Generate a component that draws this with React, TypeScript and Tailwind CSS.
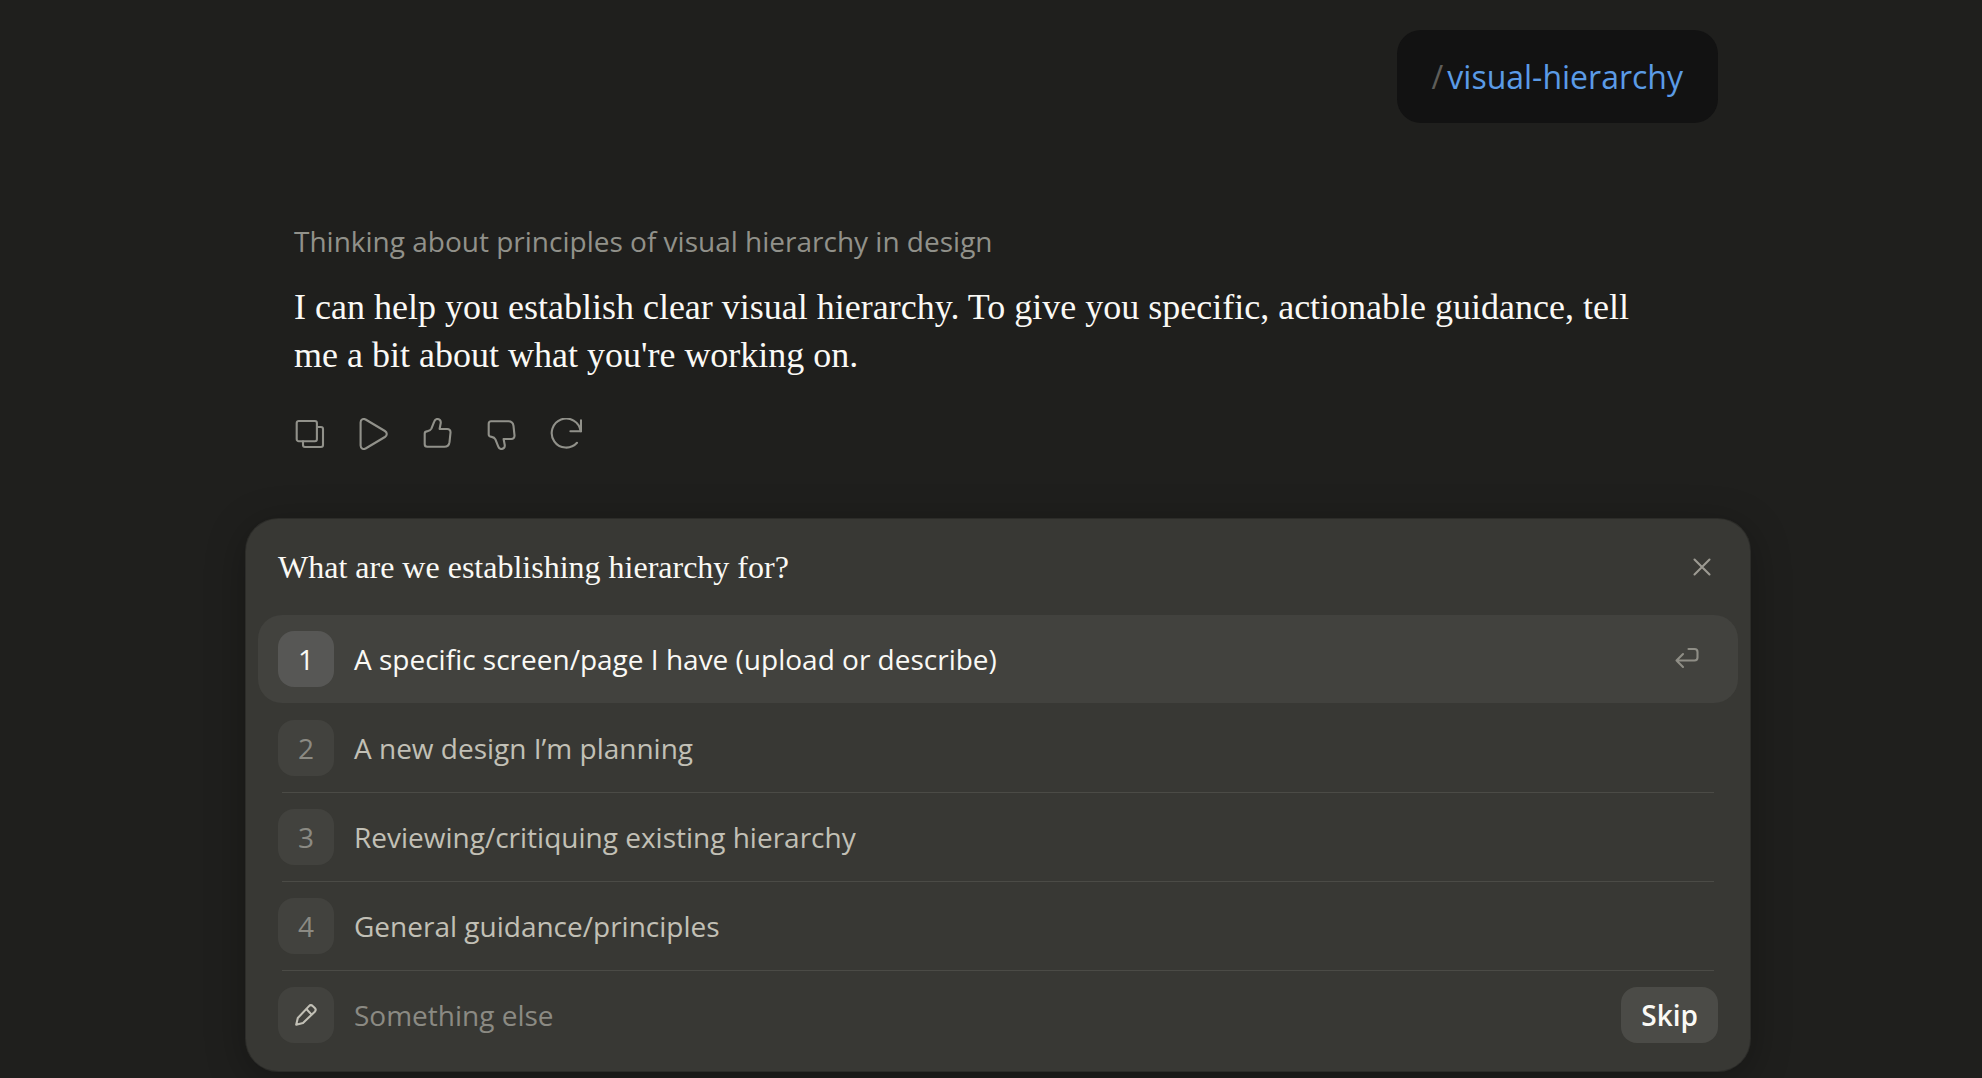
import type { ReactNode } from "react";

const options = [
  "A specific screen/page I have (upload or describe)",
  "A new design I’m planning",
  "Reviewing/critiquing existing hierarchy",
  "General guidance/principles",
];

function Icon({ children, className = "size-8" }: { children: ReactNode; className?: string }) {
  return (
    <svg
      viewBox="0 0 32 32"
      fill="none"
      stroke="currentColor"
      strokeWidth="2.1"
      strokeLinecap="round"
      strokeLinejoin="round"
      aria-hidden="true"
      className={className}
    >
      {children}
    </svg>
  );
}

const thumb =
  "M2.7 15.5C2.7 13.6 4 13.3 5.6 13.1C7.4 12.8 8.6 12.2 9.4 10.6L12.3 3.4C12.9 1.7 14 1 15.3 1C17.8 1 19.1 2.9 18.7 5.2L17.6 11H25.2C27.4 11 28.7 12.5 28.5 14.6L27.5 24.2C27.1 27.2 25.4 28.8 22.4 28.8H5.2C3.6 28.8 2.7 27.9 2.7 26.3Z";

const actions: { label: string; icon: ReactNode }[] = [
  {
    label: "Copy",
    icon: (
      <>
        <rect x="2.7" y="3" width="20.2" height="20.2" rx="2" />
        <path d="M23 9H27a2 2 0 0 1 2 2v16a2 2 0 0 1-2 2H11a2 2 0 0 1-2-2v-3.6" />
      </>
    ),
  },
  {
    label: "Read aloud",
    icon: <path d="M2.6 4.4C2.6 1.6 5.2 .2 7.6 1.5L26.9 13C29.4 14.6 29.4 17.4 26.9 19L7.6 30.5C5.2 31.8 2.6 30.4 2.6 27.6Z" />,
  },
  { label: "Good response", icon: <path d={thumb} /> },
  {
    label: "Bad response",
    icon: <path d={thumb} transform="matrix(1 0 0 -1 0 32)" />,
  },
  {
    label: "Retry",
    icon: (
      <>
        <path d="M27 24.8A14.5 14.5 0 1 1 30.6 13.2" />
        <path d="M31 2.4V13.2H20.4" strokeLinejoin="miter" />
      </>
    ),
  },
];

export default function App() {
  return (
    <div className="min-h-screen bg-[#1f1f1d] pl-3.5 font-['Open_Sans',sans-serif] text-[28px] leading-9 text-[#faf9f5]">
      <main className="mx-auto flex max-w-[1504px] flex-col pt-[30px] pb-1">
        <div className="mr-8 self-end rounded-3xl bg-[#121212] px-[35px] py-6 text-[32px] leading-[45px]">
          <span className="mr-1 text-[#5e5d59]">/</span>
          <span className="text-[#5b9be6]">visual-hierarchy</span>
        </div>

        <section className="mt-[100px] px-12">
          <p className="text-[#91918a]">Thinking about principles of visual hierarchy in design</p>
          <p className="mt-6 mr-12 font-['Liberation_Serif',serif] text-[36px] leading-[48px]">
            I can help you establish clear visual hierarchy. To give you specific, actionable guidance, tell me a bit
            about what you're working on.
          </p>
          <div className="mt-[39px] flex gap-8 text-[#91918a]">
            {actions.map((a) => (
              <button key={a.label} type="button" aria-label={a.label}>
                <Icon>{a.icon}</Icon>
              </button>
            ))}
          </div>
        </section>

        <section
          aria-labelledby="question"
          className="mt-[69px] rounded-[32px] bg-[#383834] px-3 pb-3 shadow-[0_0_0_1px_#2c2c29,0_8px_40px_rgba(0,0,0,0.3)]"
        >
          <header className="flex h-24 items-center justify-between px-5">
            <h2 id="question" className="font-['Liberation_Serif',serif] text-[32px] leading-10">
              What are we establishing hierarchy for?
            </h2>
            <button type="button" aria-label="Close" className="text-[#9c9a92]">
              <Icon>
                <path d="M8.5 8.5l15 15M23.5 8.5l-15 15" />
              </Icon>
            </button>
          </header>

          <ul>
            {options.map((text, i) => (
              <li key={text}>
                {i > 1 && <div className="mx-6 h-px bg-[#4b4b46]" />}
                {i === 1 && <div className="h-px" />}
                <button
                  type="button"
                  className={
                    i === 0
                      ? "flex w-full items-center gap-5 rounded-3xl bg-[#42423e] px-5 py-4 text-left text-[#faf9f5]"
                      : "flex w-full items-center gap-5 rounded-3xl px-5 py-4 text-left text-[#c2c0b6]"
                  }
                >
                  <span
                    className={
                      i === 0
                        ? "flex size-14 items-center justify-center rounded-2xl bg-[#575755]"
                        : "flex size-14 items-center justify-center rounded-2xl bg-[#42423e] text-[#8b8a83]"
                    }
                  >
                    {i + 1}
                  </span>
                  <span className={i === 0 ? "flex-1 font-medium" : "flex-1"}>{text}</span>
                  {i === 0 && (
                    <span className="pr-4 text-[#8f8e86]">
                      <Icon>
                        <path d="M18.5 6H24.5a3 3 0 0 1 3 3V14.5a3 3 0 0 1-3 3H6.5M13 11l-6.5 6.5L13 24" />
                      </Icon>
                    </span>
                  )}
                </button>
              </li>
            ))}
          </ul>

          <div className="mx-6 h-px bg-[#4b4b46]" />
          <form className="flex items-center gap-5 px-5 py-4">
            <label
              htmlFor="other"
              aria-label="Something else"
              className="flex size-14 items-center justify-center rounded-2xl bg-[#42423e] text-[#c2c0b6]"
            >
              <Icon>
                <path d="M6.2 25.8L7.8 19L19 7.1C20.2 5.8 21.5 5.8 22.7 7L24.8 9C26 10.2 26 11.4 24.8 12.7L13 24Z" />
                <path d="M16.6 10.2L21.4 15.4" />
              </Icon>
            </label>
            <input
              id="other"
              placeholder="Something else"
              className="min-w-0 flex-1 bg-transparent outline-none placeholder:text-[#8b8a83]"
            />
            <button type="button" className="h-14 rounded-2xl bg-[#4b4b47] px-5 font-semibold">
              Skip
            </button>
          </form>
        </section>
      </main>
    </div>
  );
}
